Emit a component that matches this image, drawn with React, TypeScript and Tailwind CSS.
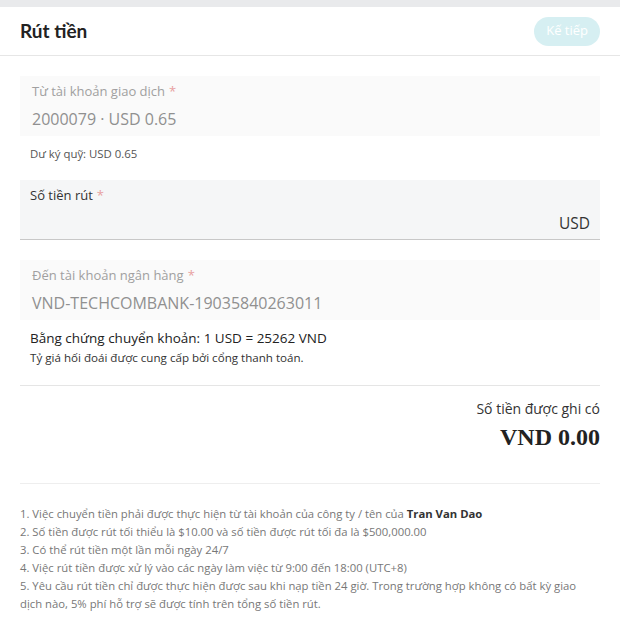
import React from 'react';

const notes = [
  <>1. Việc chuyển tiền phải được thực hiện từ tài khoản của công ty / tên của <b className="font-bold text-[#333]">Tran Van Dao</b></>,
  <>2. Số tiền được rút tối thiểu là $10.00 và số tiền được rút tối đa là $500,000.00</>,
  <>3. Có thể rút tiền một lần mỗi ngày 24/7</>,
  <>4. Việc rút tiền được xử lý vào các ngày làm việc từ 9:00 đến 18:00 (UTC+8)</>,
  <>5. Yêu cầu rút tiền chỉ được thực hiện được sau khi nạp tiền 24 giờ. Trong trường hợp không có bất kỳ giao dịch nào, 5% phí hỗ trợ sẽ được tính trên tổng số tiền rút.</>,
];

const Req = () => <span className="ml-1 text-[#e8a0a0]">*</span>;

export default function App() {
  return (
    <div className="min-h-screen bg-white font-['Open_Sans',sans-serif] text-[#333]">
      <div className="h-[7px] bg-[#e9eaec]" />
      <div className="flex h-[49px] items-center justify-between border-b border-[#e6e6e6] px-5">
        <h1 className="font-['Lato',sans-serif] text-[19px] font-bold text-[#222]">Rút tiền</h1>
        <button className="h-[29px] rounded-full bg-[#d6eff2] px-3 text-[13px] text-white">Kế tiếp</button>
      </div>

      <div className="px-5 pt-[20px]">
        <div className="h-[60px] bg-[#fafafa] px-[12px] pt-[6px]">
          <div className="text-[13px] leading-[18px] text-[#a0a0a0]">Từ tài khoản giao dịch<Req /></div>
          <div className="mt-[8px] text-[16px] leading-[22px] text-[#909090]">2000079 · USD 0.65</div>
        </div>
        <div className="px-[10px] pt-[10px] text-[11.4px] leading-[16px] text-[#555]">Dư ký quỹ: USD 0.65</div>

        <div className="mt-[18px] h-[60px] border-b border-[#c8c8c8] bg-[#f5f6f7] px-[10px] pt-[6px]">
          <div className="text-[13px] leading-[18px] text-[#333]">Số tiền rút<Req /></div>
          <div className="mt-[8px] text-right text-[15.5px] leading-[22px] text-[#333]">USD</div>
        </div>

        <div className="mt-[20px] h-[60px] bg-[#fafafa] px-[12px] pt-[6px]">
          <div className="text-[13px] leading-[18px] text-[#a0a0a0]">Đến tài khoản ngân hàng<Req /></div>
          <div className="mt-[8px] text-[16px] leading-[22px] text-[#909090]">VND-TECHCOMBANK-19035840263011</div>
        </div>
        <div className="px-[10px] pt-[8px]">
          <div className="text-[13.5px] leading-[20px] text-[#222]">Bằng chứng chuyển khoản: 1 USD = 25262 VND</div>
          <div className="text-[11.6px] leading-[20px] text-[#333]">Tỷ giá hối đoái được cung cấp bởi cổng thanh toán.</div>
        </div>

        <div className="mt-[17px] border-t border-[#e5e5e5] pt-[13px] text-right">
          <div className="text-[14px] leading-[20px] text-[#333]">Số tiền được ghi có</div>
          <div className="mt-[4px] font-['Liberation_Serif',serif] text-[24px] font-bold leading-[28px] text-[#222]">VND 0.00</div>
        </div>

        <div className="mt-[32px] border-t border-[#eeeeee] pt-[21px]">
          {notes.map((n, i) => (
            <div key={i} className="text-[11.3px] leading-[18px] text-[#777]">{n}</div>
          ))}
        </div>
      </div>
    </div>
  );
}
